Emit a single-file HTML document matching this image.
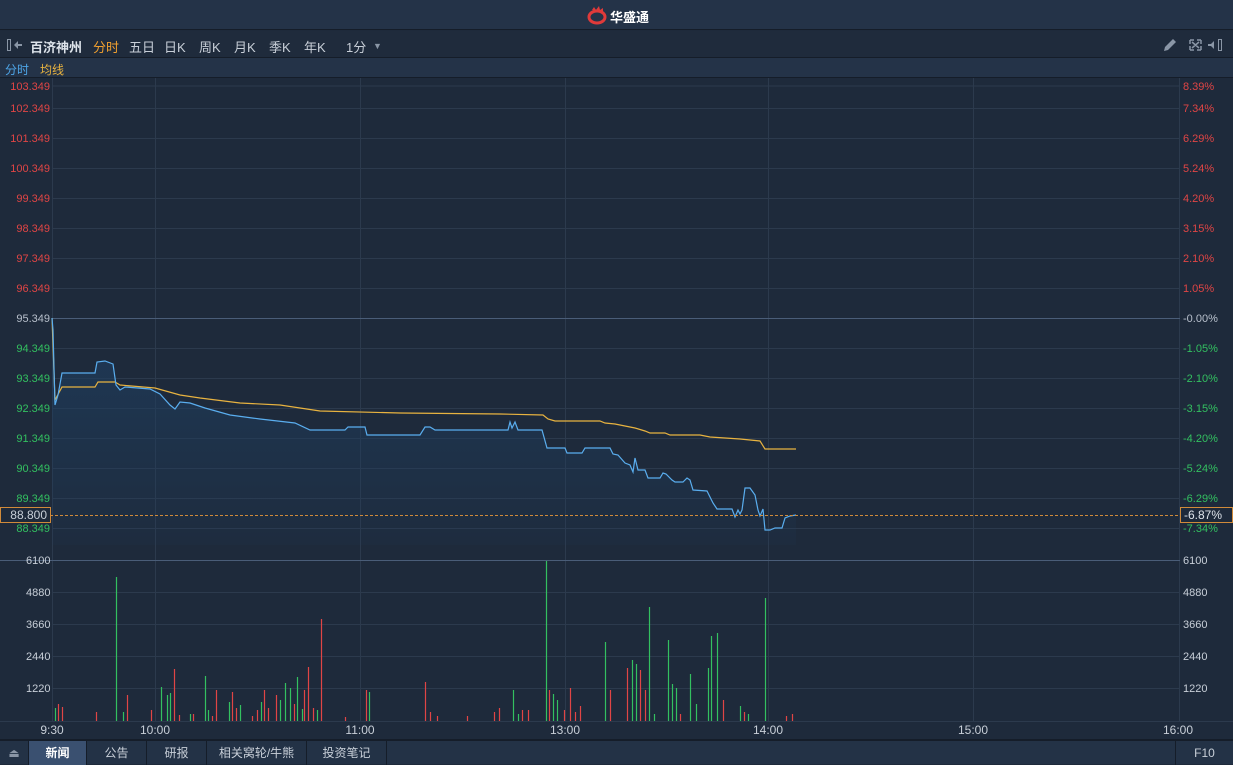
<!DOCTYPE html>
<html><head><meta charset="utf-8"><style>
*{margin:0;padding:0;box-sizing:border-box}
body{width:1233px;height:764px;background:#1e2a3b;font-family:"Liberation Sans","Noto Sans CJK SC",sans-serif;overflow:hidden;position:relative}
.top{position:absolute;left:0;top:0;width:1233px;height:30px;background:#243348;border-bottom:1px solid #151d29}
.tb{position:absolute;left:0;top:31px;width:1233px;height:27px;background:#1f2b3c;border-bottom:1px solid #151d29;color:#c8cfd8;font-size:13px}
.tb span{position:absolute;top:6px}
.sb{position:absolute;left:0;top:58px;width:1233px;height:20px;background:#243348;border-bottom:1px solid #151d29;font-size:12px}
.bot{position:absolute;left:0;top:740px;width:1233px;height:24px;background:#233246;border-top:1px solid #151d29;font-size:12px;color:#c8cfd8}
.tab{position:absolute;top:0;height:24px;line-height:24px;text-align:center;border-right:1px solid #151d29}
svg{position:absolute;left:0;top:0}
</style></head><body>
<div class="top"><svg width="30" height="20" style="left:586px;top:6px" viewBox="0 0 30 20"><ellipse cx="11" cy="11" rx="8" ry="6" fill="none" stroke="#e03a3a" stroke-width="3"/><path d="M6 4 L8 1 L10 4 L13 0 L14 4 L17 2 L17 6" fill="#e03a3a"/></svg><span style="position:absolute;left:610px;top:7px;color:#fff;font-weight:bold;font-size:13px">华盛通</span></div>
<div class="tb">
<svg width="20" height="14" style="left:6px;top:7px" viewBox="0 0 20 14"><rect x="1.5" y="1.5" width="3" height="11" fill="none" stroke="#8a96a6"/><path d="M8 7 L12 3 L12 11 Z M12 6 H16 V8 H12Z" fill="#8a96a6"/></svg>
<span style="left:30px;font-weight:bold;color:#dde3ea">百济神州</span>
<span style="left:93px;color:#f0a030">分时</span>
<span style="left:129px">五日</span><span style="left:164px">日K</span><span style="left:199px">周K</span><span style="left:234px">月K</span><span style="left:269px">季K</span><span style="left:304px">年K</span><span style="left:346px">1分</span><span style="left:373px;color:#8a96a6;font-size:9px;top:10px">▼</span>
<svg width="70" height="16" style="left:1160px;top:6px" viewBox="0 0 70 16"><path d="M4 14 L5 10 L13 2 L16 5 L8 13 Z" fill="#8a96a6"/><path d="M30 3 H34 M30 3 V7 M41 3 H37 M41 3 V7 M30 13 H34 M30 13 V9 M41 13 H37 M41 13 V9 M32 5 L39 11 M39 5 L32 11" stroke="#8a96a6" stroke-width="1.5" fill="none"/><path d="M50 8 L54 4 L54 12 Z M50 7 H50 M48 7 H54 V9 H48Z" fill="#8a96a6"/><rect x="58.5" y="2.5" width="3" height="11" fill="none" stroke="#8a96a6"/></svg>
</div>
<div class="sb"><span style="position:absolute;left:5px;top:3px;color:#4ea6e8">分时</span><span style="position:absolute;left:40px;top:3px;color:#e8b340">均线</span></div>
<svg width="1233" height="764" font-family="Liberation Sans" font-size="11">
<defs><linearGradient id="gf" x1="0" y1="0" x2="0" y2="1"><stop offset="0" stop-color="#1f3d5e" stop-opacity="0.8"/><stop offset="1" stop-color="#1f3d5e" stop-opacity="0.1"/></linearGradient></defs>
<g stroke="#2c3a4d" stroke-width="1">
<line x1="52" y1="86" x2="1180" y2="86"/><line x1="52" y1="108.5" x2="1180" y2="108.5"/><line x1="52" y1="138.5" x2="1180" y2="138.5"/><line x1="52" y1="168.5" x2="1180" y2="168.5"/><line x1="52" y1="198.5" x2="1180" y2="198.5"/><line x1="52" y1="228.5" x2="1180" y2="228.5"/><line x1="52" y1="258.5" x2="1180" y2="258.5"/><line x1="52" y1="288.5" x2="1180" y2="288.5"/><line x1="52" y1="348.5" x2="1180" y2="348.5"/><line x1="52" y1="378.5" x2="1180" y2="378.5"/><line x1="52" y1="408.5" x2="1180" y2="408.5"/><line x1="52" y1="438.5" x2="1180" y2="438.5"/><line x1="52" y1="468.5" x2="1180" y2="468.5"/><line x1="52" y1="498.5" x2="1180" y2="498.5"/><line x1="52" y1="528.5" x2="1180" y2="528.5"/>
<line x1="52" y1="592.5" x2="1180" y2="592.5"/><line x1="52" y1="624.5" x2="1180" y2="624.5"/><line x1="52" y1="656.5" x2="1180" y2="656.5"/><line x1="52" y1="688.5" x2="1180" y2="688.5"/>
<line x1="155.5" y1="78" x2="155.5" y2="721"/><line x1="360.5" y1="78" x2="360.5" y2="721"/><line x1="565.5" y1="78" x2="565.5" y2="721"/><line x1="768.5" y1="78" x2="768.5" y2="721"/><line x1="973.5" y1="78" x2="973.5" y2="721"/><line x1="1179.5" y1="78" x2="1179.5" y2="721"/><line x1="52.5" y1="78" x2="52.5" y2="721"/>
</g>
<line x1="52" y1="318.5" x2="1180" y2="318.5" stroke="#4a5d78"/>
<line x1="0" y1="560.5" x2="1180" y2="560.5" stroke="#4a5d78"/>
<line x1="0" y1="721.5" x2="1233" y2="721.5" stroke="#2c3a4d"/>
<line x1="0" y1="739.5" x2="1233" y2="739.5" stroke="#151d29"/>
<g text-anchor="end" fill="#e04545">
<text x="50" y="90">103.349</text><text x="50" y="112">102.349</text><text x="50" y="142">101.349</text><text x="50" y="172">100.349</text><text x="50" y="202">99.349</text><text x="50" y="232">98.349</text><text x="50" y="262">97.349</text><text x="50" y="292">96.349</text></g>
<text x="50" y="322" text-anchor="end" fill="#b8c0cc">95.349</text>
<g text-anchor="end" fill="#33c060"><text x="50" y="352">94.349</text><text x="50" y="382">93.349</text><text x="50" y="412">92.349</text><text x="50" y="442">91.349</text><text x="50" y="472">90.349</text><text x="50" y="502">89.349</text><text x="50" y="532">88.349</text></g>
<g fill="#e04545"><text x="1183" y="90">8.39%</text><text x="1183" y="112">7.34%</text><text x="1183" y="142">6.29%</text><text x="1183" y="172">5.24%</text><text x="1183" y="202">4.20%</text><text x="1183" y="232">3.15%</text><text x="1183" y="262">2.10%</text><text x="1183" y="292">1.05%</text></g>
<text x="1183" y="322" fill="#b8c0cc">-0.00%</text>
<g fill="#33c060"><text x="1183" y="352">-1.05%</text><text x="1183" y="382">-2.10%</text><text x="1183" y="412">-3.15%</text><text x="1183" y="442">-4.20%</text><text x="1183" y="472">-5.24%</text><text x="1183" y="502">-6.29%</text><text x="1183" y="532">-7.34%</text></g>
<g fill="#c8cfd8"><text x="26" y="564">6100</text><text x="26" y="596">4880</text><text x="26" y="628">3660</text><text x="26" y="660">2440</text><text x="26" y="692">1220</text>
<text x="1183" y="564">6100</text><text x="1183" y="596">4880</text><text x="1183" y="628">3660</text><text x="1183" y="660">2440</text><text x="1183" y="692">1220</text>
<g font-size="12" text-anchor="middle"><text x="52" y="734">9:30</text><text x="155" y="734">10:00</text><text x="360" y="734">11:00</text><text x="565" y="734">13:00</text><text x="768" y="734">14:00</text><text x="973" y="734">15:00</text><text x="1178" y="734">16:00</text></g></g>
<polygon fill="url(#gf)" points="52,318 53,330 55,405 58,395 62,373 95,373 97,362 105,361 113,364 116,385 120,390 125,387 150,389 160,394 170,405 175,409 180,402 190,403 205,408 230,415 260,419 295,423 310,430 345,430 348,427 365,427 367,435 420,435 425,427 430,427 435,430 508,430 510,422 512,428 515,422 518,430 542,430 547,448 565,448 567,453 582,453 585,448 610,448 613,454 618,455 625,463 630,465 633,472 635,458 638,470 645,470 648,478 660,478 663,473 666,474 672,480 675,482 683,482 687,478 690,480 693,490 707,491 710,497 713,503 717,509 732,509 735,517 738,510 740,514 742,510 745,488 750,488 755,495 758,510 760,516 763,509 765,530 770,530 775,528 782,528 785,518 790,516 796,515 796,545 52,545"/>
<polyline fill="none" stroke="#e8b340" stroke-width="1.2" points="52,318 55,400 62,387 95,387 98,382 115,382 120,385 155,388 180,395 200,398 240,403 280,405 320,411 400,413 500,414 543,415 548,419 555,421 600,421 605,423 615,424 625,426 635,428 645,431 650,433 665,433 670,435 700,435 710,437 740,439 760,441 765,449 796,449"/>
<polyline fill="none" stroke="#5aaeef" stroke-width="1.2" points="52,318 53,330 55,405 58,395 62,373 95,373 97,362 105,361 113,364 116,385 120,390 125,387 150,389 160,394 170,405 175,409 180,402 190,403 205,408 230,415 260,419 295,423 310,430 345,430 348,427 365,427 367,435 420,435 425,427 430,427 435,430 508,430 510,422 512,428 515,422 518,430 542,430 547,448 565,448 567,453 582,453 585,448 610,448 613,454 618,455 625,463 630,465 633,472 635,458 638,470 645,470 648,478 660,478 663,473 666,474 672,480 675,482 683,482 687,478 690,480 693,490 707,491 710,497 713,503 717,509 732,509 735,517 738,510 740,514 742,510 745,488 750,488 755,495 758,510 760,516 763,509 765,530 770,530 775,528 782,528 785,518 790,516 796,515"/>
<line x1="0" y1="515.5" x2="1180" y2="515.5" stroke="#d08a3a" stroke-dasharray="3,2"/>
<rect x="0.5" y="507.5" width="50" height="15" fill="#1e2a3b" stroke="#d08a3a"/><text x="47" y="519" text-anchor="end" fill="#c8cfd8" font-size="12">88.800</text>
<rect x="1180.5" y="507.5" width="52" height="15" fill="#1e2a3b" stroke="#d08a3a"/><text x="1184" y="519" fill="#dde3ea" font-size="12">-6.87%</text>
<g stroke-width="1.2" id="v"></g>
</svg>
<div class="bot">
<div class="tab" style="left:0;width:29px;color:#8a96a6">⏏</div>
<div class="tab" style="left:29px;width:58px;background:#3a5070;color:#fff;font-weight:bold">新闻</div>
<div class="tab" style="left:87px;width:60px">公告</div>
<div class="tab" style="left:147px;width:60px">研报</div>
<div class="tab" style="left:207px;width:100px">相关窝轮/牛熊</div>
<div class="tab" style="left:307px;width:80px">投资笔记</div>
<div class="tab" style="left:1175px;width:58px;border-left:1px solid #151d29;border-right:none">F10</div>
</div>
<script>
var b=[[55,708,'g'],[58,704,'r'],[62,707,'r'],[96,712,'r'],[116,577,'g'],[123,712,'g'],[127,695,'r'],[151,710,'r'],[161,687,'g'],[167,695,'g'],[170,693,'g'],[174,669,'r'],[179,715,'r'],[190,714,'g'],[193,714,'r'],[205,676,'g'],[208,710,'g'],[212,716,'r'],[216,690,'r'],[229,702,'g'],[232,692,'r'],[236,708,'r'],[240,705,'g'],[252,716,'r'],[257,710,'r'],[261,702,'g'],[264,690,'r'],[268,708,'r'],[276,695,'r'],[280,700,'g'],[285,683,'g'],[290,688,'g'],[294,704,'r'],[297,677,'g'],[302,709,'g'],[304,690,'r'],[308,667,'r'],[313,708,'r'],[317,710,'g'],[321,619,'r'],[345,717,'r'],[366,690,'r'],[369,692,'g'],[425,682,'r'],[430,712,'r'],[437,716,'r'],[467,716,'r'],[494,712,'r'],[499,708,'r'],[513,690,'g'],[518,714,'g'],[522,710,'r'],[528,710,'r'],[546,561,'g'],[549,690,'r'],[553,694,'g'],[557,700,'g'],[564,710,'r'],[570,688,'r'],[575,712,'r'],[580,706,'r'],[605,642,'g'],[610,690,'r'],[627,668,'r'],[632,660,'g'],[636,664,'g'],[640,670,'r'],[645,690,'r'],[649,607,'g'],[654,714,'g'],[668,640,'g'],[672,684,'g'],[676,688,'g'],[680,714,'r'],[690,674,'g'],[696,704,'g'],[708,668,'g'],[711,636,'g'],[717,633,'g'],[723,700,'r'],[740,706,'g'],[744,712,'r'],[748,714,'g'],[765,598,'g'],[786,716,'r'],[792,714,'r']];
var s='';b.forEach(function(a){s+='<line x1="'+(a[0]+.5)+'" x2="'+(a[0]+.5)+'" y1="'+a[1]+'" y2="721" stroke="'+(a[2]=='g'?'#33c060':'#e04545')+'"/>';});
document.getElementById('v').innerHTML=s;
</script>
</body></html>
